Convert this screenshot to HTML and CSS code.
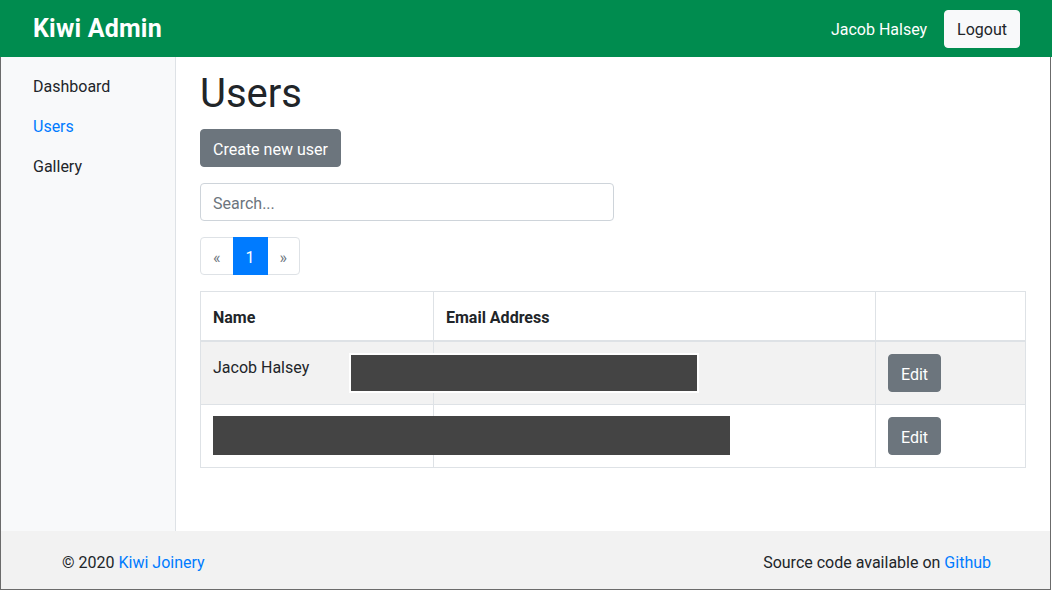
FILE: index.html
```html
<!DOCTYPE html>
<html lang="en">
<head>
<meta charset="utf-8">
<title>Kiwi Admin - Users</title>
<link rel="stylesheet" href="styles.css">
</head>
<body>
<div class="app">
  <header class="navbar">
    <a class="brand" href="#">Kiwi Admin</a>
    <div class="nav-right">
      <span class="nav-user">Jacob Halsey</span>
      <button class="btn btn-light">Logout</button>
    </div>
  </header>
  <div class="frame">
    <div class="middle">
      <nav class="sidebar">
        <a class="side-link" href="#">Dashboard</a>
        <a class="side-link active" href="#">Users</a>
        <a class="side-link" href="#">Gallery</a>
      </nav>
      <main class="main">
        <h1 class="title">Users</h1>
        <div class="actions">
          <button class="btn btn-secondary">Create new user</button>
        </div>
        <input class="search" type="text" placeholder="Search...">
        <ul class="pagination">
          <li class="page-item disabled"><span class="page-link">&laquo;</span></li>
          <li class="page-item active"><span class="page-link">1</span></li>
          <li class="page-item disabled"><span class="page-link">&raquo;</span></li>
        </ul>
        <div class="table-wrap">
          <table class="table">
            <colgroup>
              <col class="col-name">
              <col class="col-email">
              <col class="col-action">
            </colgroup>
            <thead>
              <tr><th>Name</th><th>Email Address</th><th></th></tr>
            </thead>
            <tbody>
              <tr class="striped">
                <td>Jacob Halsey</td>
                <td></td>
                <td class="cell-action"><button class="btn btn-secondary">Edit</button></td>
              </tr>
              <tr>
                <td></td>
                <td></td>
                <td class="cell-action"><button class="btn btn-secondary">Edit</button></td>
              </tr>
            </tbody>
          </table>
          <div class="redact redact-one"></div>
          <div class="redact redact-two"></div>
        </div>
      </main>
    </div>
    <footer class="footer">
      <span>&copy; 2020 <a href="#">Kiwi Joinery</a></span>
      <span>Source code available on <a href="#">Github</a></span>
    </footer>
  </div>
</div>
</body>
</html>
```

FILE: styles.css
```css
* { box-sizing: border-box; }

html, body {
  margin: 0;
  padding: 0;
  background: #ffffff;
}

body {
  font-family: Roboto, "Liberation Sans", Arial, sans-serif;
  font-size: 16px;
  line-height: 24px;
  color: #212529;
}

a { color: #007bff; text-decoration: none; }

.app {
  height: 591px;
  display: flex;
  flex-direction: column;
}

.navbar {
  height: 57px;
  flex: 0 0 57px;
  background: #008c4f;
  display: flex;
  align-items: center;
  justify-content: space-between;
  padding: 0 32px 0 33px;
}

.brand {
  color: #ffffff;
  font-size: 25px;
  font-weight: 700;
  line-height: 30px;
  letter-spacing: 0.2px;
}

.nav-right {
  display: flex;
  align-items: center;
  gap: 17px;
}

.nav-user {
  color: #ffffff;
  padding-top: 2px;
}

.btn {
  font-family: inherit;
  font-size: 16px;
  line-height: 24px;
  padding: 7px 12px 5px;
  border-radius: 4px;
  border: 1px solid transparent;
  cursor: pointer;
}

.btn-light {
  background: #f8f9fa;
  border-color: #f8f9fa;
  color: #212529;
}

.btn-secondary {
  background: #6c757d;
  border-color: #6c757d;
  color: #ffffff;
  padding: 8px 12px 4px;
}

.frame {
  flex: 1;
  display: flex;
  flex-direction: column;
  border-left: 1px solid #6b6b6b;
  border-right: 1px solid #6b6b6b;
  border-bottom: 1px solid #6b6b6b;
  margin-right: 1px;
  margin-bottom: 1px;
}

.middle {
  flex: 1;
  display: flex;
}

.sidebar {
  width: 175px;
  flex: 0 0 175px;
  background: #f8f9fa;
  border-right: 1px solid #dee2e6;
  padding-top: 9px;
  display: flex;
  flex-direction: column;
}

.side-link {
  display: block;
  padding: 9px 32px 7px;
  color: #212529;
}

.side-link.active { color: #007bff; }

.main {
  flex: 1;
  padding: 13px 24px 0 24px;
  display: flex;
  flex-direction: column;
  align-items: flex-start;
}

.title {
  margin: 0 0 11px;
  font-size: 40px;
  line-height: 48px;
  font-weight: 400;
}

.actions { margin-bottom: 16px; }

.search {
  width: 414px;
  height: 38px;
  padding: 7px 12px 5px;
  font-family: inherit;
  font-size: 16px;
  line-height: 24px;
  color: #495057;
  border: 1px solid #ced4da;
  border-radius: 4px;
  margin: 0 0 16px;
}

.search::placeholder { color: #6c757d; }

.pagination {
  display: flex;
  list-style: none;
  margin: 0 0 16px;
  padding: 0;
}

.page-link {
  display: block;
  padding: 10px 12px 6px;
  line-height: 20px;
  border: 1px solid #dee2e6;
  margin-left: -1px;
  color: #007bff;
  background: #ffffff;
}

.page-item:first-child .page-link {
  margin-left: 0;
  border-radius: 4px 0 0 4px;
}

.page-item:last-child .page-link { border-radius: 0 4px 4px 0; }

.page-item.disabled .page-link { color: #6c757d; }

.page-item.active .page-link {
  background: #007bff;
  border-color: #007bff;
  color: #ffffff;
  position: relative;
}

.table-wrap {
  position: relative;
  width: 100%;
}

.table {
  width: 100%;
  border-collapse: collapse;
  table-layout: fixed;
}

.col-name { width: 233px; }
.col-email { width: 442px; }

.table th,
.table td {
  border: 1px solid #dee2e6;
  padding: 14px 12px 10px;
  text-align: left;
  vertical-align: top;
}

.table td.cell-action { padding: 12px; }

.table th {
  font-weight: 700;
  border-bottom-width: 2px;
}

.table tr.striped td { background: #f2f2f2; }

.redact {
  position: absolute;
  background: #444444;
}

.redact-one {
  left: 149px;
  top: 62px;
  width: 350px;
  height: 40px;
  border: 2px solid #ffffff;
}

.redact-two {
  left: 13px;
  top: 125px;
  width: 517px;
  height: 39px;
}

.footer {
  height: 58px;
  flex: 0 0 58px;
  background: #f2f2f2;
  display: flex;
  align-items: center;
  justify-content: space-between;
  padding: 6px 59px 0 61px;
}
```
